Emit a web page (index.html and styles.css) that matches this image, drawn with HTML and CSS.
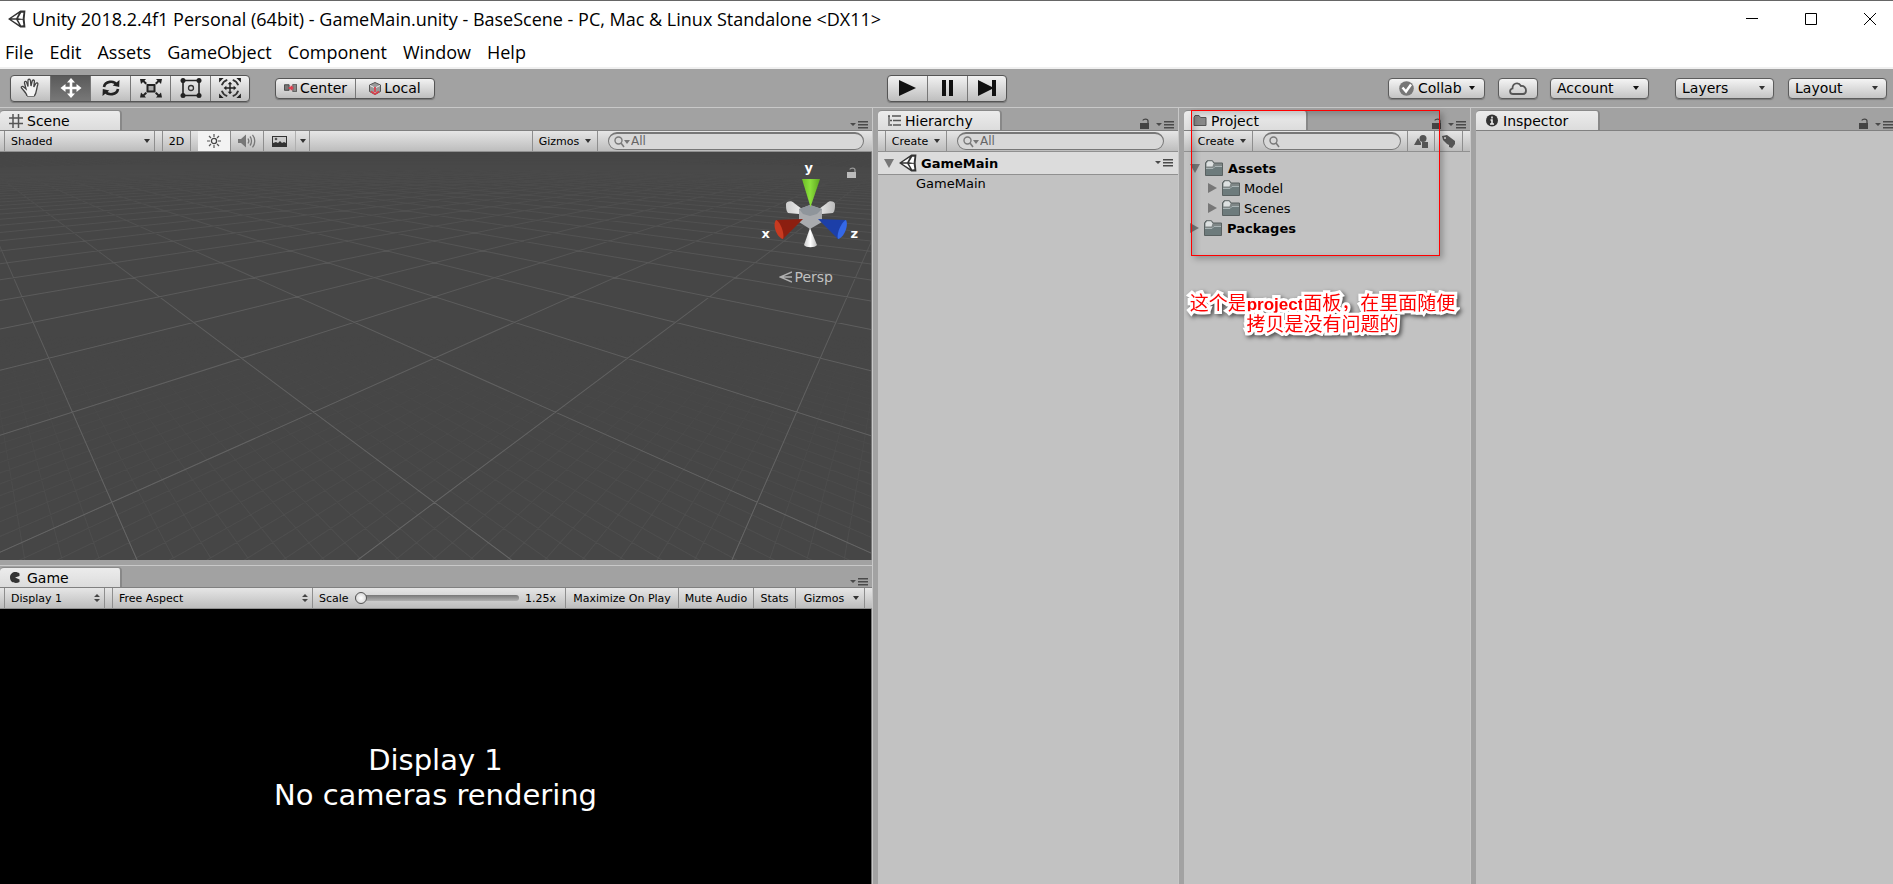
FILE: index.html
```html
<!DOCTYPE html>
<html lang="en">
<head>
<meta charset="utf-8">
<title>Unity 2018.2.4f1 Personal (64bit) - GameMain.unity</title>
<link rel="stylesheet" href="styles.css">
</head>
<body>
<svg class="defs" aria-hidden="true">
  <symbol id="unity" viewBox="1 1 16 16"><path d="M1 9 12 1.500 16.500 1.500 15.800 9l.7 7.500H12z" fill="#333"/><path d="M4 8.300 10.500 4 8.300 8.300zM4 9.700h4.300l2.600 4.500zM10 8.400l2.800-5 1.900.1L14 9zM10 9.800 14 9.600l.7 4.900-2 .2z" fill="#fff"/></symbol>
  <symbol id="arrow" viewBox="0 0 6 4"><path d="M0 0h6L3 4z"/></symbol>
  <symbol id="menu" viewBox="0 0 18 8"><path d="M0 2h6L3 5zM8 0h10v1.500H8zM8 3h10v1.500H8zM8 6h10v1.500H8z"/></symbol>
  <symbol id="lock" viewBox="0 0 10 12"><path d="M0 5h9v6H0z"/><path d="M3 2.500C3 .8 8 .3 8 3v2" fill="none" stroke="currentColor" stroke-width="1.300"/></symbol>
  <symbol id="updown" viewBox="0 0 6 8"><path d="M0 3h6L3 0zM0 5h6L3 8z"/></symbol>
  <symbol id="lens" viewBox="0 0 15 12"><circle cx="4.500" cy="4.500" r="3.500" fill="none" stroke="currentColor" stroke-width="1.400"/><path d="m7 7 3 4" stroke="currentColor" stroke-width="1.600"/></symbol>
  <symbol id="folder" viewBox="0 0 18 16"><path d="M.5 3 2 .8h5.500L9 3h8.500v12.500H.5z" fill="#7f8787" stroke="#596161"/><path d="M1.500 3.500 3 1.300h4l1.500 2.200-1 3h-6z" fill="#dde1e1"/><path d="M1 8h7l2-2h7v9H1z" fill="#6d7b7c"/><path d="M1 8.500h7l2-2h7" fill="none" stroke="#a9b4b5"/></symbol>
</svg>

<header class="titlebar">
  <svg class="logo"><use href="#unity"/></svg>
  <h1 class="title">Unity 2018.2.4f1 Personal (64bit) - GameMain.unity - BaseScene - PC, Mac &amp; Linux Standalone &lt;DX11&gt;</h1>
  <div class="window-buttons">
    <button aria-label="Minimize"><svg viewBox="0 0 12 12"><path d="M0 5.500h12"/></svg></button>
    <button aria-label="Maximize"><svg viewBox="0 0 12 12"><path d="M.5.5h11v11H.5z"/></svg></button>
    <button aria-label="Close"><svg viewBox="0 0 12 12"><path d="m0 0 12 12M12 0 0 12"/></svg></button>
  </div>
</header>
<nav class="menubar">
  <button>File</button><button>Edit</button><button>Assets</button><button>GameObject</button><button>Component</button><button>Window</button><button>Help</button>
</nav>

<div class="toolbar">
  <div class="tools">
    <div class="group tall">
      <button aria-label="Hand"><svg viewBox="0 0 22 20"><path d="M7 18c-.5-3-3-5-5.500-8-.8-1.500 1-2.200 2.200-1L6 11 4.500 5c-.3-1.800 1.700-2.200 2.200-.5L8 8.500 8 2.500C8 .8 10.200.8 10.400 2.500L11 8l1.200-5c.4-1.600 2.400-1.200 2.200.4L13.800 9l2-3.500c.9-1.300 2.500-.5 2 1-1.500 4-1 8.500-3.500 11.500" fill="#f4f4f4" stroke="#444" stroke-width="1.300"/><path d="M7 18.500h7.500" stroke="#777"/></svg></button>
      <button class="on" aria-label="Move"><svg viewBox="0 0 22 20"><path d="m11 0 4 4.500h-2.700v4.200h4.200V6L21.500 10l-5 4v-2.700h-4.200v4.200H15L11 20l-4-4.500h2.700v-4.200H5.500V14l-5-4 5-4v2.700h4.200V4.500H7z" fill="#fff"/></svg></button>
      <button aria-label="Rotate"><svg viewBox="0 0 22 20"><path d="M4 9c1-6 10-7 13-2M18 11c-1 6-10 7-13 2" fill="none" stroke="#222" stroke-width="2.600"/><path d="m19.500 2-.3 7-6.500-1.500zM2.500 18l.3-7 6.500 1.500z" fill="#222"/></svg></button>
      <button aria-label="Scale"><svg viewBox="0 0 22 20"><path d="M7.500 7h7v6.500h-7z" fill="#aaa" stroke="#222" stroke-width="2"/><path d="M0 1h6L4.500 2.700 7 5 5.500 6.500 3 4 1 6zM22 1h-6l1.500 1.700L15 5l1.500 1.500L19 4l2 2zM0 19.500h6l-1.500-1.700L7 15.500 5.500 14 3 16.500l-2-2zM22 19.500h-6l1.500-1.700-2.500-2.300 1.500-1.500 2.500 2.500 2-2z" fill="#222"/></svg></button>
      <button aria-label="Rect"><svg viewBox="0 0 22 20"><path d="M3 2.500h16v15H3z" fill="none" stroke="#222" stroke-width="1.600"/><g fill="#222"><circle cx="3" cy="2.500" r="2.500"/><circle cx="19" cy="2.500" r="2.500"/><circle cx="3" cy="17.500" r="2.500"/><circle cx="19" cy="17.500" r="2.500"/></g><circle cx="11" cy="10" r="2.500" fill="none" stroke="#333" stroke-width="1.300"/></svg></button>
      <button aria-label="Transform"><svg viewBox="0 0 24 22"><path d="m12 4 2.500 3h-1.700v3.200h3.200V8.500L19 11l-3 2.500v-1.700h-3.200V15h1.700L12 18l-2.500-3h1.700v-3.200H8v1.700L5 11l3-2.500v1.700h3.200V7H9.500z" fill="#222"/><path d="M3 8c1-3 3-5 6-6M15 2c3 1 5 3 6 6M21 14c-1 3-3 5-6 6M9 20c-3-1-5-3-6-6" fill="none" stroke="#333" stroke-width="2"/><path d="M0 0h5L0 5zM24 0h-5l5 5zM0 22h5l-5-5zM24 22h-5l5-5z" fill="#222"/></svg></button>
    </div>
    <div class="group short">
      <button><svg class="pivot" viewBox="0 0 14 8"><path d="M.5.5h5v6h-5z" fill="#777" stroke="#444"/><path d="M9.500 0h4v8h-4z" fill="#888" stroke="#555"/><path d="M5 4h5M8 1.500v5" stroke="#e04050" stroke-width="2"/></svg>Center</button>
      <button><svg class="cube" viewBox="0 0 12 13"><path d="m6 .5 5.500 2.500v6.500L6 12.500.5 9.500V3z" fill="#999" stroke="#555"/><path d="M6 6v6M1 3.500 6 6l5-2.500" fill="none" stroke="#eee"/><path d="M2 9.500 6 12l4-2.500M6 5v5" fill="none" stroke="#d8404c" stroke-width="1.800"/></svg>Local</button>
    </div>
  </div>
  <div class="group tall play">
    <button aria-label="Play"><svg viewBox="0 0 20 18"><path d="M2 1v16l17-8z"/></svg></button>
    <button aria-label="Pause"><svg viewBox="0 0 20 18"><path d="M5 1h4v16H5zM12 1h4v16h-4z"/></svg></button>
    <button aria-label="Step"><svg viewBox="0 0 20 18"><path d="M1 1v16l14-7v7h4V1h-4v7z"/></svg></button>
  </div>
  <div class="services">
    <button class="pill collab"><svg class="check" viewBox="0 0 15 15"><circle cx="7.500" cy="7.500" r="7.300" fill="#777"/><path d="m3.500 6.500 3.500 4 5-7" fill="none" stroke="#fff" stroke-width="2.400"/></svg>Collab<svg class="arrow"><use href="#arrow"/></svg></button>
    <button class="pill cloud" aria-label="Services"><svg viewBox="0 0 18 13"><path d="M4 12C.5 12 0 7.500 3.500 6.500 3.500 1 9.500-.5 12 4c3-.5 5 2 5 4.500S15.500 12 14 12z" fill="none" stroke="#555" stroke-width="1.800"/></svg></button>
    <button class="pill wide">Account<svg class="arrow"><use href="#arrow"/></svg></button>
    <label class="drop layers"><select class="pill" aria-label="Layers"><option>Layers</option></select><svg class="arrow"><use href="#arrow"/></svg></label>
    <label class="drop"><select class="pill" aria-label="Layout"><option>Layout</option></select><svg class="arrow"><use href="#arrow"/></svg></label>
  </div>
</div>

<main class="workspace">
  <div class="views">
    <section class="panel scene">
      <div class="tabs"><button class="tab"><svg viewBox="0 0 14 14"><path d="M4 0v14M9.500 0v14M0 4h14M0 9.500h14" stroke="#555" stroke-width="1.500"/></svg>Scene</button><svg class="menu"><use href="#menu"/></svg></div>
      <div class="strip">
        <label class="cell drop shaded"><select aria-label="Draw mode"><option>Shaded</option></select><svg class="arrow"><use href="#arrow"/></svg></label>
        <button class="cell two-d">2D</button>
        <button class="cell light" aria-label="Lighting"><svg viewBox="0 0 14 14"><circle cx="7" cy="7" r="2.600" fill="none" stroke="#444" stroke-width="1.300"/><path d="M7 0v3M7 11v3M0 7h3M11 7h3M2 2l2 2M10 10l2 2M12 2l-2 2M4 10l-2 2" stroke="#555" stroke-width="1.200"/></svg></button>
        <button class="cell audio" aria-label="Audio"><svg viewBox="0 0 18 14"><path d="M0 5h3l5-4.500v13L3 9H0z" fill="#777"/><path d="M10 4.500c1 1.500 1 3.500 0 5M12 2.500c2 2.500 2 6.500 0 9M14.500.8c3 3.500 3 9 0 12.500" fill="none" stroke="#777" stroke-width="1.300"/></svg></button>
        <button class="cell fx" aria-label="Effects"><svg viewBox="0 0 15 11"><path d="M0 0h15v11H0z" fill="#333"/><path d="M1 1h13v6l-2-1-2 1-2-2-2 2-2-1-3 1z" fill="#ccc"/><circle cx="4" cy="3" r="1.300" fill="#555"/></svg></button>
        <button class="cell more" aria-label="Effects menu"><svg class="arrow"><use href="#arrow"/></svg></button>
        <span class="space"></span>
        <button class="cell gizmos">Gizmos<svg class="arrow"><use href="#arrow"/></svg></button>
        <label class="search"><svg class="lens"><use href="#lens"/></svg><svg class="arrow"><use href="#arrow"/></svg><input type="text" placeholder="All" aria-label="Search scene"></label>
      </div>
      <div class="canvas">
        <svg class="grid" id="grid" viewBox="0 0 872 408" preserveAspectRatio="none" aria-hidden="true">
          <defs>
            <linearGradient id="near" x1="0" y1="0" x2="0" y2="408" gradientUnits="userSpaceOnUse"><stop offset="0" stop-color="#fff" stop-opacity="0"/><stop offset=".12" stop-color="#fff" stop-opacity=".25"/><stop offset=".4" stop-color="#fff" stop-opacity=".75"/><stop offset="1" stop-color="#fff"/></linearGradient>
            <linearGradient id="deep" x1="0" y1="0" x2="0" y2="408" gradientUnits="userSpaceOnUse"><stop offset=".45" stop-color="#fff" stop-opacity="0"/><stop offset="1" stop-color="#fff"/></linearGradient>
            <mask id="fade" maskUnits="userSpaceOnUse" x="0" y="0" width="872" height="408"><rect width="872" height="408" fill="url(#near)"/></mask>
            <mask id="fade-minor" maskUnits="userSpaceOnUse" x="0" y="0" width="872" height="408"><rect width="872" height="408" fill="url(#deep)"/></mask>
          </defs>
          <g mask="url(#fade-minor)"><path id="minor" class="minor"/></g>
          <g mask="url(#fade)"><path id="major" class="major"/></g>
        </svg>
        <svg class="gizmo" viewBox="0 0 120 80" role="img" aria-label="Orientation gizmo">
          <defs>
            <linearGradient id="gg"><stop offset="0" stop-color="#6cbc26"/><stop offset=".45" stop-color="#8be03c"/><stop offset="1" stop-color="#5da41f"/></linearGradient>
            <linearGradient id="wg"><stop offset="0" stop-color="#ccc"/><stop offset=".5" stop-color="#fff"/><stop offset="1" stop-color="#bbb"/></linearGradient>
          </defs>
          <path d="M46 28c0-3 6-4 8-1l8 6-3 5-11-1c-2-2-2-6-2-9zM95 28c0-3-6-4-8-1l-8 6 3 5 11-1c2-2 2-6 2-9z" fill="url(#wg)"/>
          <path d="m70 29 12 4v13l-12 7-11-7V33z" fill="#a9abae"/><path d="m70 29 12 4-5 5-7 2-7-2-4-5z" fill="#8f959b"/>
          <path d="M62 3h18L70.500 31z" fill="url(#gg)"/>
          <path d="M70 52l7 17c-2 3-11 3-13 0z" fill="url(#wg)"/>
          <path d="M36 44 63 43 43 63z" fill="#8c1f10"/><path d="M36 44c4 1 9 14 7 19-6-1-11-14-7-19z" fill="#c83a20"/>
          <path d="M106 44 78 43 98 63z" fill="#1c3fa8"/><path d="M106 44c-4 1-10 14-8 19 6-1 11-14 8-19z" fill="#3468e8"/>
        </svg>
        <span class="axis axis-y">y</span><span class="axis axis-x">x</span><span class="axis axis-z">z</span>
        <svg class="lock scene-lock"><use href="#lock"/></svg>
        <button class="persp"><svg viewBox="0 0 13 12"><path d="M13 1 1 6l12 5M1 6h12" fill="none" stroke="#b0b0b0" stroke-width="1.400"/></svg>Persp</button>
      </div>
    </section>
    <section class="panel game">
      <div class="tabs"><button class="tab"><svg viewBox="0 0 14 14"><path d="M10.500 2.500C7-.5 1 1 1 6.500S7 13 10.500 11V8.500L6 6.500 10.500 5z" fill="#333"/></svg>Game</button><svg class="menu"><use href="#menu"/></svg></div>
      <div class="strip">
        <label class="cell drop display"><select aria-label="Display"><option>Display 1</option></select><svg class="updown"><use href="#updown"/></svg></label>
        <label class="cell drop aspect"><select aria-label="Aspect"><option>Free Aspect</option></select><svg class="updown"><use href="#updown"/></svg></label>
        <label class="scale">Scale<input type="range" min="1" max="5" step="0.01" value="1"><output>1.25x</output></label>
        <button class="cell maximize">Maximize On Play</button>
        <button class="cell mute">Mute Audio</button>
        <button class="cell stats">Stats</button>
        <button class="cell game-gizmos">Gizmos<svg class="arrow"><use href="#arrow"/></svg></button>
        <span class="cap"></span>
      </div>
      <div class="screen"><p>Display 1<br>No cameras rendering</p></div>
    </section>
  </div>

  <section class="panel side">
    <div class="tabs"><button class="tab"><svg viewBox="0 0 14 14"><path d="M1 2h2M5 2h9M2 2v10M3 6.500h2M6 6.500h8M3 11h2M6 11h8" stroke="#555" stroke-width="1.300" fill="none"/></svg>Hierarchy</button><svg class="lock"><use href="#lock"/></svg><svg class="menu"><use href="#menu"/></svg></div>
    <div class="strip">
      <button class="cell create">Create<svg class="arrow"><use href="#arrow"/></svg></button>
      <label class="search"><svg class="lens"><use href="#lens"/></svg><svg class="arrow"><use href="#arrow"/></svg><input type="text" placeholder="All" aria-label="Search hierarchy"></label>
      <span class="pad"></span>
    </div>
    <div class="scene-row"><svg class="open" viewBox="0 0 10 9"><path d="M0 0h10L5 9z"/></svg><svg class="logo"><use href="#unity"/></svg><b>GameMain</b><svg class="menu"><use href="#menu"/></svg></div>
    <div class="object-row">GameMain</div>
  </section>

  <section class="panel side project">
    <div class="tabs"><button class="tab"><svg viewBox="0 0 14 14"><path d="M1 3.500 2 1.500h4l1.500 2H13v8H1z" fill="#888" stroke="#555"/></svg>Project</button><svg class="lock"><use href="#lock"/></svg><svg class="menu"><use href="#menu"/></svg></div>
    <div class="strip">
      <button class="cell create">Create<svg class="arrow"><use href="#arrow"/></svg></button>
      <label class="search"><svg class="lens"><use href="#lens"/></svg><input type="text" aria-label="Search project"></label>
      <button class="cell filter first" aria-label="Filter by type"><svg viewBox="0 0 14 13"><circle cx="9" cy="3.500" r="3.500"/><path d="M4 3 0 10h7V8zM8 7h6v6H8z"/></svg></button>
      <button class="cell filter" aria-label="Filter by label"><svg viewBox="0 0 14 13"><path d="M0 1 5 0l8 6v3l-3 4-3-1v-2L5 9 1 5z"/><circle cx="3" cy="3" r="1" fill="#ddd"/></svg></button>
      <span class="cap"></span>
    </div>
    <ul class="tree">
      <li class="root"><svg class="open" viewBox="0 0 10 9"><path d="M0 0h10L5 9z"/></svg><svg class="folder"><use href="#folder"/></svg><b>Assets</b></li>
      <li class="child"><svg class="shut" viewBox="0 0 9 10"><path d="M0 0v10l9-5z"/></svg><svg class="folder"><use href="#folder"/></svg>Model</li>
      <li class="child"><svg class="shut" viewBox="0 0 9 10"><path d="M0 0v10l9-5z"/></svg><svg class="folder"><use href="#folder"/></svg>Scenes</li>
      <li class="root"><svg class="shut" viewBox="0 0 9 10"><path d="M0 0v10l9-5z"/></svg><svg class="folder"><use href="#folder"/></svg><b>Packages</b></li>
    </ul>
    <div class="highlight"></div>
    <p class="note" lang="zh-CN">这个是<b>project</b>面板，在里面随便<br>拷贝是没有问题的</p>
  </section>

  <section class="panel side inspector">
    <div class="tabs"><button class="tab"><svg viewBox="0 0 14 14"><circle cx="7" cy="6.500" r="6" fill="#333"/><path d="M7 2.500v2M5.500 6H7v4M5 10h4" stroke="#eee" stroke-width="1.600" fill="none"/></svg>Inspector</button><svg class="lock"><use href="#lock"/></svg><svg class="menu"><use href="#menu"/></svg></div>
  </section>
</main>
<script src="grid.js"></script>
</body>
</html>
```
FILE: styles.css
```css
* { box-sizing: border-box; }
html, body { height: 100%; }
body {
  margin: 0;
  display: flex;
  flex-direction: column;
  overflow: hidden;
  background: #a2a2a2;
  color: #000;
  font-family: "DejaVu Sans", sans-serif;
  font-size: 13px;
}
button, select, input { font: inherit; color: inherit; margin: 0; padding: 0; border: 0; background: none; }
select { appearance: none; outline: 0; }
p, h1, ul { margin: 0; padding: 0; }
svg { flex: none; display: block; }
.defs { position: absolute; width: 0; height: 0; }
.logo { width: 18px; height: 18px; }
.arrow { width: 6px; height: 4px; fill: #333; }
.updown { width: 6px; height: 8px; fill: #444; }
.menu { width: 18px; height: 8px; fill: #4a4a4a; }
.lock { width: 10px; height: 12px; fill: #444; color: #444; }
.lens { width: 15px; height: 12px; color: #7a7a7a; }

.titlebar {
  display: flex;
  align-items: center;
  height: 36px;
  padding-left: 8px;
  border-top: 1px solid #666;
  background: #fff;
}
.title { flex: 1; margin-left: 6px; font: 400 18px/24px "Open Sans", sans-serif; white-space: nowrap; }
.window-buttons { display: flex; gap: 47px; padding-right: 17px; }
.window-buttons svg { width: 12px; height: 12px; fill: none; stroke: #000; }
.menubar {
  display: flex;
  gap: 16px;
  height: 33px;
  padding: 0 5px;
  border-bottom: 2px solid #f0f0f0;
  background: #fff;
  font: 18px/32px "Open Sans", sans-serif;
}

.toolbar {
  display: grid;
  grid-template-columns: 1fr auto 1fr;
  align-items: center;
  height: 39px;
  padding: 0 6px 0 10px;
  border-bottom: 1px solid #c8c8c8;
  font-size: 14px;
}
.tools { display: flex; align-items: center; gap: 25px; }
.group { display: flex; border: 1px solid #555; border-radius: 4px; background: linear-gradient(#f2f2f2, #bebebe); box-shadow: 0 1px 1px #777; overflow: hidden; }
.group button { display: flex; align-items: center; justify-content: center; }
.group button + button { border-left: 1px solid #777; }
.tall button { width: 40px; height: 25px; }
.tall button:first-child, .tall button:last-child { width: 39px; }
.tall svg { width: 22px; height: 20px; }
.tall .on { background: linear-gradient(#5a5a5a, #787878); }
.play { margin-right: 4px; }
.play svg { width: 20px; height: 18px; fill: #111; }
.short button { width: 79px; height: 19px; gap: 3px; }
.short .pivot { width: 13px; height: 8px; }
.short .cube { width: 12px; height: 13px; }
.services { display: flex; justify-content: flex-end; }
.pill {
  display: flex;
  align-items: center;
  height: 21px;
  border: 1px solid #5c5c5c;
  border-radius: 4px;
  background: linear-gradient(#f4f4f4, #c4c4c4);
  box-shadow: 0 1px 1px #7a7a7a;
}
.collab { width: 97px; padding: 0 9px 0 10px; gap: 4px; margin-right: 13px; }
.check { width: 15px; height: 15px; }
.pill .arrow { margin-left: auto; fill: #111; }
.cloud { width: 40px; justify-content: center; margin-right: 12px; }
.cloud svg { width: 18px; height: 13px; }
.wide { width: 99px; padding: 0 9px 0 6px; margin-right: 26px; }
.drop { display: grid; align-items: center; position: relative; }
.drop > * { grid-area: 1 / 1; }
.drop > svg { justify-self: end; margin-right: 9px; pointer-events: none; }
.drop .pill { width: 99px; padding-left: 6px; }
.layers { margin-right: 14px; }

.workspace {
  flex: 1;
  min-height: 0;
  display: grid;
  grid-template-columns: 873fr 301fr 287fr 417fr;
  column-gap: 5px;
}
.workspace > * { min-width: 0; border-right: 1px solid #c8c8c8; }
.views { display: grid; grid-template-rows: 458fr 319fr; min-height: 0; }
.panel { position: relative; display: flex; flex-direction: column; min-width: 0; min-height: 0; background: #c2c2c2; }
.tabs { display: flex; align-items: flex-end; height: 23px; padding: 2px 2px 0 0; background: #a2a2a2; border-bottom: 1px solid #808080; }
.tab {
  display: flex;
  align-items: center;
  gap: 4px;
  width: 122px;
  height: 20px;
  margin-right: auto;
  padding-left: 9px;
  border-right: 2px solid #888;
  border-top: 1px solid #8a8a8a;
  border-radius: 4px 4px 0 0;
  background: linear-gradient(#ececec, #dcdcdc);
  font-size: 14px;
  line-height: 18px;
}
.side .tab { width: 124px; }
.tab svg { width: 14px; height: 14px; }
.tabs .menu { margin: 0 2px 1px 6px; }
.strip {
  display: flex;
  flex: none;
  height: 21px;
  padding-left: 4px;
  border-bottom: 1px solid #909090;
  background: linear-gradient(#e6e6e6, #bdbdbd);
  font-size: 11px;
}
.side .strip { padding-left: 7px; }
.cell { display: flex; align-items: center; justify-content: center; padding: 0 5px; border-right: 1px solid #8e8e8e; white-space: nowrap; }
.cell:first-child { border-left: 1px solid #8e8e8e; }
.cell.drop { display: grid; justify-content: stretch; padding: 0 0 0 6px; }
.cell.drop select { text-align: left; width: 100%; }
.cell.drop > svg { margin-right: 4px; }
.shaded { width: 151px; margin-right: 7px; }
.cell.two-d { width: 29px; border-left: 1px solid #8e8e8e; margin-right: 7px; }
.light { width: 33px; background: #f3f3f3; }
.light svg { width: 14px; height: 14px; }
.audio { width: 33px; }
.audio svg { width: 18px; height: 14px; }
.fx { width: 32px; border-color: #b0b0b0; }
.fx svg { width: 15px; height: 11px; }
.more { width: 14px; padding: 0; }
.space { flex: 1; }
.gizmos { width: 66px; gap: 6px; border-left: 1px solid #8e8e8e; }
.scene .search { width: 256px; margin-right: 8px; }
.search {
  display: flex;
  align-items: center;
  height: 18px;
  margin: 1px 6px 0 10px;
  padding-left: 5px;
  border: 1px solid #777;
  border-top-width: 2px;
  border-radius: 9px;
  background: #d8d8d8;
  color: #666;
  font-size: 12px;
}
.search .arrow { margin-left: -5px; margin-right: 1px; fill: #777; }
.search input { flex: 1; min-width: 0; width: 0; height: 14px; padding-bottom: 2px; outline: 0; }
.search input::placeholder { color: #666; opacity: 1; }
.create { width: 62px; gap: 6px; }
.side .search { flex: 1; }
.pad { width: 8px; }
.cap { flex: 1; max-width: 7px; }
.filter { width: 28px; padding: 0; }
.filter.first { border-left: 1px solid #8e8e8e; }
.filter svg { width: 14px; height: 13px; fill: #555; }

.canvas { position: relative; flex: 1; min-height: 0; background: #464646; border-right: 1px solid #777; }
.grid { position: absolute; width: 100%; height: 100%; }
.major { fill: none; stroke: #666; stroke-width: 1; }
.minor { fill: none; stroke: #4f4f4f; stroke-width: 1; }
.gizmo { position: absolute; right: 11px; top: 24px; width: 120px; height: 80px; }
.axis { position: absolute; color: #fff; font-size: 13px; line-height: 16px; font-weight: bold; }
.axis-y { right: 58px; top: 8px; }
.axis-x { right: 101px; top: 74px; }
.axis-z { right: 13px; top: 74px; }
.scene-lock { position: absolute; right: 14px; top: 15px; fill: #bbb; color: #999; }
.persp { position: absolute; right: 38px; top: 117px; display: flex; align-items: center; gap: 3px; color: #c0c0c0; font-size: 14px; }
.persp svg { width: 13px; height: 12px; }
.game { border-top: 1px solid #c8c8c8; }
.scene { border-bottom: 5px solid #a2a2a2; }
.game .tabs { height: 22px; }
.display { width: 101px; margin-right: 7px; }
.cell.aspect { width: 201px; border-left: 1px solid #8e8e8e; }
.scale { flex: 1; display: flex; align-items: center; gap: 6px; padding: 0 9px 0 6px; border-right: 1px solid #8e8e8e; }
.scale input { flex: 1; min-width: 0; height: 14px; appearance: none; }
.scale input::-webkit-slider-runnable-track { height: 6px; border-radius: 3px; background: linear-gradient(#777, #b0b0b0); }
.scale input::-webkit-slider-thumb { appearance: none; width: 12px; height: 12px; margin-top: -3px; border: 1px solid #555; border-radius: 50%; background: radial-gradient(#fff, #ccc); }
.maximize { width: 113px; }
.mute { width: 75px; }
.stats { width: 42px; }
.game-gizmos { width: 69px; gap: 9px; padding: 0 4px 0 7px; }
.screen { flex: 1; min-height: 0; display: grid; place-items: center; padding-bottom: 3px; background: #000; color: #fff; font-size: 29px; line-height: 35px; text-align: center; border-right: 1px solid #777; }
.screen p { padding-top: 66px; }

.scene-row { display: flex; align-items: center; height: 23px; padding: 0 5px 0 6px; border-bottom: 1px solid #909090; background: #dcdcdc; }
.scene-row b { margin: 0 auto 0 4px; }
.open { width: 10px; height: 9px; fill: #777; }
.shut { width: 9px; height: 10px; fill: #777; }
.scene-row .logo { margin-left: 5px; }
.object-row { padding-left: 38px; line-height: 18px; }
.tree { list-style: none; padding-top: 6px; }
.tree li { display: flex; align-items: center; height: 20px; }
.root { padding-left: 6px; }
.child { padding-left: 24px; }
.folder { width: 18px; height: 16px; margin: 0 5px 0 5px; }
.child .folder { margin-right: 4px; }
.highlight { position: absolute; left: 7px; top: 2px; width: 249px; height: 146px; border: 1px solid #f00; box-shadow: 3px 3px 6px rgba(0, 0, 0, .25), inset 3px 3px 6px rgba(0, 0, 0, .2); pointer-events: none; }
.note {
  position: absolute;
  left: 0;
  right: 9px;
  top: 186px;
  color: #f00;
  font: 19px/20px "Liberation Sans", "Noto Sans CJK SC", sans-serif;
  text-align: center;
  white-space: nowrap;
  -webkit-text-stroke: 6px #fff;
  paint-order: stroke fill;
  filter: drop-shadow(2px 2px 2px rgba(0, 0, 0, .6));
}
.note b { font-size: 17px; }
.inspector { border-right: 0; }
.inspector .tabs { padding-right: 0; }
.inspector .menu { margin-right: 0; }
```
FILE: grid.js
```js
// Perspective ground grid: two families of lines, each meeting at its own vanishing point.
const HORIZON = -8;
const BASE = 206;
const CENTER = 435;
const STEP = 193;
const VANISH = [CENTER - 480, CENTER + 480];

function lines(step, count) {
  const t = (480 - HORIZON) / (BASE - HORIZON);
  let d = '';
  for (const vx of VANISH) {
    for (let k = -count; k <= count; k++) {
      const x = CENTER + step * k;
      d += `M${vx} ${HORIZON}L${Math.round(vx + (x - vx) * t)} 480`;
    }
  }
  return d;
}

document.getElementById('major').setAttribute('d', lines(STEP, 40));
document.getElementById('minor').setAttribute('d', lines(STEP / 10, 80));
```
